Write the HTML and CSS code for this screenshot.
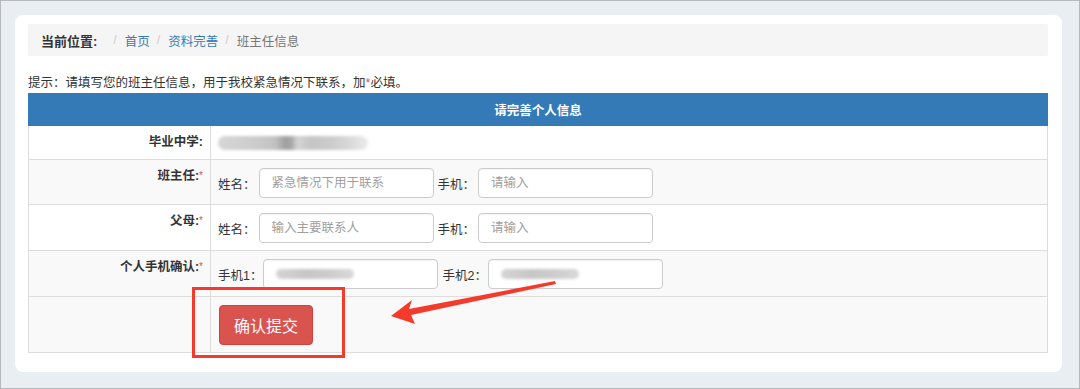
FILE: index.html
```html
<!DOCTYPE html>
<html lang="zh-CN">
<head>
<meta charset="utf-8">
<title>班主任信息</title>
<link rel="stylesheet" href="styles.css">
</head>
<body>
<div class="frame">
  <div class="card">
    <div class="crumb">
      <span class="crumb-title">当前位置:</span>
      <span class="sep first">/</span>
      <a class="crumb-link">首页</a>
      <span class="sep">/</span>
      <a class="crumb-link">资料完善</a>
      <span class="sep">/</span>
      <span class="crumb-current">班主任信息</span>
    </div>
    <p class="hint">提示：请填写您的班主任信息，用于我校紧急情况下联系，加<span class="req">*</span>必填。</p>
    <table class="info">
      <thead>
        <tr class="head-row"><th colspan="2">请完善个人信息</th></tr>
      </thead>
      <tbody>
        <tr class="r1">
          <td class="lbl">毕业中学:</td>
          <td class="val"><div class="blur-school"></div></td>
        </tr>
        <tr class="r2 alt">
          <td class="lbl">班主任:<sup class="req">*</sup></td>
          <td class="val">
            <div class="fields">
              <span class="flabel">姓名：</span><input class="inp" placeholder="紧急情况下用于联系">
              <span class="flabel">手机：</span><input class="inp" placeholder="请输入">
            </div>
          </td>
        </tr>
        <tr class="r3">
          <td class="lbl">父母:<sup class="req">*</sup></td>
          <td class="val">
            <div class="fields">
              <span class="flabel">姓名：</span><input class="inp" placeholder="输入主要联系人">
              <span class="flabel">手机：</span><input class="inp" placeholder="请输入">
            </div>
          </td>
        </tr>
        <tr class="r4 alt">
          <td class="lbl">个人手机确认:<sup class="req">*</sup></td>
          <td class="val">
            <div class="fields">
              <span class="flabel tight">手机1：</span><div class="inp fake"><span class="blur-phone"></span></div>
              <span class="flabel tight">手机2：</span><div class="inp fake"><span class="blur-phone"></span></div>
            </div>
          </td>
        </tr>
        <tr class="r5 alt">
          <td class="lbl"></td>
          <td class="val"><button class="submit">确认提交</button></td>
        </tr>
      </tbody>
    </table>
  </div>
  <div class="mark-box"></div>
  <svg class="mark-arrow" width="1080" height="389" viewBox="0 0 1080 389">
    <polygon points="391,316 412,300 409,309 555,281 556,284 411,315 415,324" fill="#f43a2b"/>
  </svg>
</div>
</body>
</html>
```

FILE: styles.css
```css
* { box-sizing: border-box; }
html, body { margin: 0; padding: 0; }
body {
  font-family: "Liberation Sans", "Noto Sans CJK SC", sans-serif;
  font-size: 12.5px;
  color: #333;
}
.frame {
  position: relative;
  width: 1080px;
  height: 389px;
  border: 1px solid #b5b9bc;
  background: #e8eef1;
  padding: 14px 17px 0 14px;
  overflow: hidden;
}
.card {
  background: #fff;
  border-radius: 8px;
  padding: 9px 14px 19px 13px;
}
.crumb {
  height: 32px;
  background: #f5f5f5;
  border-radius: 2px;
  padding: 0 13px;
  display: flex;
  align-items: center;
  font-size: 12.5px;
}
.crumb-title { font-weight: bold; color: #333; font-size: 13px; }
.sep { color: #ccc; padding: 0 8px 0 7px; }
.sep.first { margin-left: 9px; }
.crumb-link { color: #3a7ab3; text-decoration: none; }
.crumb-current { color: #777; }
.hint {
  margin: 18px 0 0;
  height: 19px;
  line-height: 19px;
  font-size: 12.5px;
  color: #333;
}
.req { color: #d9534f; }
sup.req { font-size: 10px; vertical-align: top; position: relative; top: -1px; font-weight: normal; }
.info {
  width: 100%;
  border-collapse: collapse;
  border: 1px solid #ddd;
}
.head-row th {
  height: 32px;
  background: #337ab7;
  color: #fff;
  font-weight: bold;
  font-size: 12.5px;
  text-align: center;
  padding: 0;
  border: 1px solid #337ab7;
}
.info td {
  border: 1px solid #ddd;
  padding: 0;
}
.alt td { background: #f9f9f9; }
.lbl {
  width: 182px;
  text-align: right;
  font-weight: bold;
  vertical-align: top;
  padding: 8px 7px 0 0 !important;
  line-height: 17px;
  white-space: nowrap;
}
.val { vertical-align: top; padding: 8px 7px 0 !important; }
.r1 { height: 34px; }
.r1 .val { padding-top: 0 !important; vertical-align: middle; }
.r2 { height: 45px; }
.r3 { height: 46px; }
.r4 { height: 46px; }
.r5 { height: 56px; }
.fields { display: flex; align-items: center; height: 30px; }
.flabel { margin-right: 3px; white-space: nowrap; }
.flabel.tight { margin-right: 1px; }
.inp {
  width: 175px;
  height: 30px;
  border: 1px solid #ccc;
  border-radius: 4px;
  padding: 0 12px;
  font-family: inherit;
  font-size: 12.5px;
  color: #555;
  background: #fff;
  margin: 0 4px 0 0;
  box-shadow: inset 0 1px 1px rgba(0,0,0,0.05);
  outline: none;
}
.inp::placeholder { color: #a0a0a0; }
.fake { display: flex; align-items: center; }
.blur-phone {
  display: block;
  width: 78px;
  height: 10px;
  background: linear-gradient(90deg, #d4d4d4, #c6c6c6 40%, #cdcdcd 70%, #d8d8d8);
  filter: blur(1.5px);
  border-radius: 5px;
}
.blur-school {
  width: 150px;
  height: 14px;
  margin-left: 0;
  background: linear-gradient(90deg, #d6d6d6 0, #cdcdcd 22%, #c2c2c2 38%, #9f9f9f 45%, #a8a8a8 49%, #d4d4d4 53%, #c5c5c5 62%, #cbcbcb 75%, #d9d9d9 88%, #ebebeb 100%);
  filter: blur(1.5px);
  border-radius: 7px;
}
.submit {
  width: 94px;
  height: 40px;
  background: #d9534f;
  border: 1px solid #d43f3a;
  border-radius: 4px;
  color: #fff;
  font-family: inherit;
  font-size: 16px;
  padding: 0;
  margin-left: 1px;
}
.mark-box {
  position: absolute;
  left: 191px;
  top: 286px;
  width: 153px;
  height: 71px;
  border: 3px solid #f43a2b;
}
.mark-arrow {
  position: absolute;
  left: -1px;
  top: -1px;
  pointer-events: none;
}
```
